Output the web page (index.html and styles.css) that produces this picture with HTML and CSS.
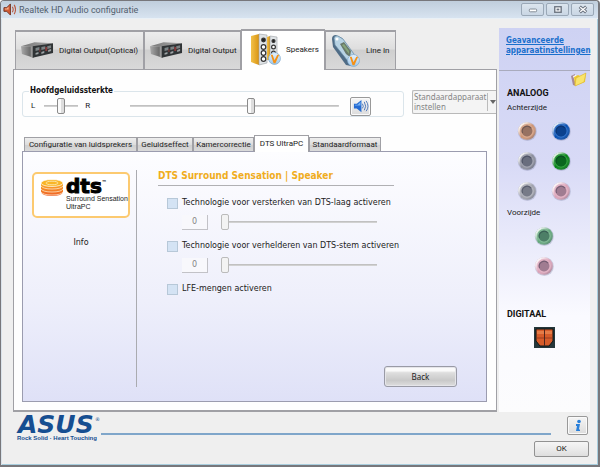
FILE: index.html
```html
<!DOCTYPE html>
<html lang="nl">
<head>
<meta charset="utf-8">
<meta name="viewport" content="width=device-width, initial-scale=1">
<title>Realtek HD Audio configuratie</title>
<link rel="stylesheet" href="styles.css">
</head>
<body>
<svg class="defs" aria-hidden="true">
  <defs>
    <linearGradient id="rackTop" x1="0" x2="1"><stop offset="0" stop-color="#777"/><stop offset="1" stop-color="#a8a8a8"/></linearGradient>
    <linearGradient id="rackSide" x1="0" x2="1"><stop offset="0" stop-color="#aaa"/><stop offset="1" stop-color="#555"/></linearGradient>
    <linearGradient id="gold" x1="0" x2="1"><stop offset="0" stop-color="#f2c14a"/><stop offset="1" stop-color="#d99412"/></linearGradient>
    <linearGradient id="badgeFill" x1="0" y1="0" x2="0" y2="1"><stop offset="0" stop-color="#e8f4ff"/><stop offset="1" stop-color="#9cc6e8"/></linearGradient>
    <linearGradient id="disc" x1="0" y1="0" x2="0" y2="1"><stop offset="0" stop-color="#fbb32a"/><stop offset="1" stop-color="#ee5a24"/></linearGradient>
    <linearGradient id="jackShine" x1="0" y1="0" x2="1" y2="1"><stop offset="0.1" stop-color="#fff"/><stop offset=".5" stop-color="#fff" stop-opacity="0"/><stop offset="1" stop-color="#101830" stop-opacity=".35"/></linearGradient>
    <symbol id="rack" viewBox="0 0 34 17">
      <path d="M0 4 14 0 33 1 17 4Z" fill="url(#rackTop)"/>
      <path d="M0 4 13 4v12L1 12Z" fill="url(#rackSide)"/>
      <path d="M12 4 33 1v10L12 16Z" fill="#303436"/>
      <path d="M10 4h2v12l-2-1Z" fill="#999"/>
      <path d="M15 6l4-1v3l-4 1ZM21 5l4-1v3l-4 1ZM27 4l4-1v3l-4 1Z" fill="#7b8385"/>
      <path d="M15 11l3-1v2l-3 1ZM21 10l3-1v2l-3 1ZM28 8l3-1v2l-3 1Z" fill="#9ca2a4"/>
      <path d="M19 7h1v3h-1ZM25 5h2v4h-2Z" fill="#873b3b"/>
    </symbol>
    <symbol id="check" viewBox="0 0 14 14">
      <circle cx="7" cy="7" r="6.4" fill="url(#badgeFill)" stroke="#79a6cc" stroke-width=".7"/>
      <path d="M3 3h2l2 6 3-6h2L8 12H6Z" fill="#f59116"/>
    </symbol>
    <symbol id="jack" viewBox="0 0 20 20">
      <circle cx="10.300" cy="10.500" r="9.500" fill="#70789a" opacity=".3"/>
      <circle cx="10" cy="10" r="8.800" fill="currentColor"/>
      <circle cx="10" cy="10" r="8" fill="none" stroke="url(#jackShine)" stroke-width="2"/>
      <circle cx="10" cy="10" r="6.200" fill="none" stroke="#fff" stroke-width=".8" opacity=".3"/>
      <circle cx="10" cy="10" r="5.400" fill="#182034" fill-opacity=".3"/>
      <path d="M5.500 12a5 5 0 0 1 8.500-5" fill="none" stroke="#101830" stroke-width="1.200" opacity=".3"/>
    </symbol>
  </defs>
</svg>
<div class="window">
  <header class="titlebar">
    <svg class="app-icon" viewBox="0 0 14 14" aria-hidden="true"><path d="M1 5h3l4-4v12L4 9H1Z" fill="#d15b35" stroke="#70301e"/><path d="M2 6h2l2-2v3H2Z" fill="#f9b18a"/><path d="M10 4q2 3 0 6M12 2q3 5 0 10" fill="none" stroke="#b95a42" stroke-width="1.2"/></svg>
    <h1>Realtek HD Audio configuratie</h1>
    <div class="captions">
      <button type="button" aria-label="Minimaliseren"><svg viewBox="0 0 22 12"><rect x="7.500" y="5.500" width="8" height="3" rx="1" fill="#fff" stroke="#7c8591"/></svg></button>
      <button type="button" aria-label="Maximaliseren"><svg viewBox="0 0 22 12"><rect x="8" y="3" width="7" height="6" fill="#fff" stroke="#6c7480" stroke-width="1.500"/><rect x="10" y="5" width="3" height="2" fill="#6c7480"/></svg></button>
      <button type="button" aria-label="Sluiten"><svg viewBox="0 0 22 12"><path d="m8 3 7 6m0-6-7 6" stroke="#6c7480" stroke-width="3.500"/><path d="m8.500 3.500 6 5m0-5-6 5" stroke="#fff" stroke-width="1.500"/></svg></button>
    </div>
  </header>
  <div class="content">
    <main class="main">
      <nav class="devices" aria-label="Apparaten">
        <button type="button" class="device device-optical"><svg class="rack" aria-hidden="true"><use href="#rack"/></svg>Digital Output(Optical)</button>
        <button type="button" class="device device-digital"><svg class="rack" aria-hidden="true"><use href="#rack"/></svg>Digital Output</button>
        <button type="button" class="device device-speakers active"><svg class="picture" viewBox="0 0 30 34" aria-hidden="true">
          <path d="M0 3 8 1v31l-8-3Z" fill="url(#gold)"/><path d="M8 1l8 1v28l-8 2Z" fill="#dfe3e6" stroke="#9aa0a4" stroke-width=".6"/>
          <path d="M16 4l3-1v24h-3Z" fill="url(#gold)"/><path d="M19 3l7 1v22l-7 2Z" fill="#dfe3e6" stroke="#9aa0a4" stroke-width=".6"/>
          <g fill="#fff" stroke="#333" stroke-width="1.200"><circle cx="12.500" cy="7" r="1.800" fill="#222"/><circle cx="12.500" cy="14" r="2.300"/><circle cx="12.500" cy="20" r="2.300"/><circle cx="12.500" cy="26" r="2.300"/><circle cx="22.500" cy="8" r="1.500" fill="#222"/><circle cx="22.500" cy="14" r="1.900"/><circle cx="22.500" cy="20" r="1.900"/></g>
          <use href="#check" x="17" y="19" width="13" height="13"/></svg>Speakers</button>
        <button type="button" class="device device-line"><svg class="picture" viewBox="0 0 30 34" aria-hidden="true">
          <path d="M1 5q0-4 4-4l6 3 11 15 2 9-4 4-5-1L2 13Z" fill="#4f6c86"/><path d="M3 4q1-3 4-2l5 3 11 15 1 7-4 4L4 11Z" fill="#b8d3e4" stroke="#668aa5" stroke-width=".7"/>
          <path d="m9 10 4-2 7 9-1 6-4-3Z" fill="#68796a"/><path d="m11 11 2-1 5 7v3Z" fill="#86a57a"/><circle cx="6" cy="5" r="1.500" fill="#fff"/>
          <use href="#check" x="16" y="20" width="13" height="13"/></svg>Line In</button>
      </nav>
      <section class="device-panel">
        <div class="volume-row">
          <fieldset class="volume">
            <legend>Hoofdgeluidssterkte</legend>
            <label for="balance">L</label>
            <input class="balance" id="balance" type="range" value="50">
            <span class="right-mark">R</span>
            <input class="master" id="master" type="range" value="58" aria-label="Hoofdgeluidssterkte">
            <button type="button" class="square" aria-label="Dempen"><svg viewBox="0 0 18 16" aria-hidden="true"><path d="M2 5h3l5-4v13L5 10H2Z" fill="#246bd2"/><path d="M3 6h3l3-3v4H3Z" fill="#78b4f4"/><path d="M11 5q2 3 0 5M13 3q3 5 0 9M15 2q4 6 0 11" fill="none" stroke="#4b75ba"/></svg></button>
          </fieldset>
          <div class="default-device">
            <button type="button">Standaardapparaat instellen</button>
            <button type="button" class="more" aria-label="Meer opties"><svg viewBox="0 0 6 4" aria-hidden="true"><path d="M0 0h6L3 4Z" fill="#666"/></svg></button>
          </div>
        </div>
        <nav class="tabs" aria-label="Instellingen">
          <button type="button" class="tab-config">Configuratie van luidsprekers</button>
          <button type="button" class="tab-effect">Geluidseffect</button>
          <button type="button" class="tab-room">Kamercorrectie</button>
          <button type="button" class="tab-dts active">DTS UltraPC</button>
          <button type="button" class="tab-format">Standaardformaat</button>
        </nav>
        <section class="settings">
          <aside class="brand">
            <div class="dts-card">
              <svg class="dts-disc" viewBox="0 0 24 17" aria-hidden="true"><path d="M1 4v9q1 4 11 4t11-4V4Z" fill="url(#disc)"/><ellipse cx="12" cy="4" rx="11" ry="3.500" fill="#f9b527" stroke="#fff" stroke-width=".7"/><ellipse cx="12" cy="4" rx="6" ry="1.800" fill="none" stroke="#fde4a2"/><path d="M1 7q2 3 11 3t11-3M1 10q2 3 11 3t11-3M1 13q2 3 11 3t11-3" fill="none" stroke="#fff3d8" stroke-width=".7"/></svg>
              <div class="dts-words"><strong>dts<sup>™</sup></strong><span>Surround Sensation</span><small>UltraPC</small></div>
            </div>
            <button type="button" class="info-link">Info</button>
          </aside>
          <form class="form">
            <h2>DTS Surround Sensation | Speaker</h2>
            <label class="check"><input type="checkbox">Technologie voor versterken van DTS-laag activeren</label>
            <div class="level"><output for="bass">0</output><input id="bass" type="range" value="0" disabled aria-label="DTS-laag"></div>
            <label class="check"><input type="checkbox">Technologie voor verhelderen van DTS-stem activeren</label>
            <div class="level"><output for="voice">0</output><input id="voice" type="range" value="0" disabled aria-label="DTS-stem"></div>
            <label class="check"><input type="checkbox">LFE-mengen activeren</label>
            <button type="button" class="back">Back</button>
          </form>
        </section>
      </section>
    </main>
    <aside class="sidebar">
      <div class="advanced"><a href="#">Geavanceerde apparaatinstellingen</a></div>
      <div class="connectors">
        <button type="button" class="folder" aria-label="Connectorinstellingen"><svg viewBox="0 0 17 15" aria-hidden="true"><path d="M1 4 5 2l1 12-3-1Z" fill="#a78a96"/><path d="m3 4 3-1v9Z" fill="#fff"/><path d="m4 5 4-2 2 1 6-3-1 9-10 4Z" fill="#efca2d"/><path d="m6 6 10-5-2 9-9 4Z" fill="#f9e46b" stroke="#d4ac2c" stroke-width=".5"/></svg></button>
        <h2>ANALOOG</h2>
        <h3>Achterzijde</h3>
        <div class="jacks">
          <svg class="jack orange"><use href="#jack"/></svg><svg class="jack blue"><use href="#jack"/></svg>
          <svg class="jack gray"><use href="#jack"/></svg><svg class="jack green"><use href="#jack"/></svg>
          <svg class="jack silver"><use href="#jack"/></svg><svg class="jack pink"><use href="#jack"/></svg>
        </div>
        <h3>Voorzijde</h3>
        <div class="jacks front">
          <svg class="jack pale-green"><use href="#jack"/></svg><svg class="jack pink"><use href="#jack"/></svg>
        </div>
        <h2 class="digital">DIGITAAL</h2>
        <svg class="optical" viewBox="0 0 21 21" aria-hidden="true"><path d="M0 0h21v21H0Z" fill="#25363a"/><path d="M2 2h17v12l-4 5H6l-4-5Z" fill="#d65b29" stroke="#0e1718"/><path d="M3 4h15v3H3Z" fill="#e57c48"/><path d="M3 10h15v2H3Z" fill="#b84b24"/><path d="M10.500 2v17" stroke="#50251c"/></svg>
      </div>
    </aside>
  </div>
  <footer class="footer">
    <div class="asus"><svg viewBox="0 0 82 18" role="img" aria-label="ASUS"><text x="1" y="17">ASUS</text><text class="reg" x="78" y="5">®</text></svg><span>Rock Solid · Heart Touching</span></div>
    <div class="rule"></div>
    <div class="actions">
      <button type="button" class="square info" aria-label="Informatie"><svg viewBox="0 0 12 14" aria-hidden="true"><circle cx="7" cy="2.500" r="1.800" fill="#287fda"/><path d="M4 5h4L7 10l1 1v1H4l1-5H4Z" fill="#287fda"/></svg></button>
      <button type="button" class="ok">OK</button>
    </div>
  </footer>
</div>
</body>
</html>
```
FILE: styles.css
```css
* { box-sizing: border-box; }
body { margin: 0; font: 8px/10px Roboto, sans-serif; color: #222; }
button, input, output { font: inherit; color: inherit; margin: 0; }
button { padding: 0; border: 0; background: none; }
h1, h2, h3 { margin: 0; }
.defs { position: absolute; width: 0; height: 0; }
.window {
  min-height: 100vh; display: flex; flex-direction: column; background: #efefef;
  border: solid #77777b; border-width: 1px 2px 2px 1px; border-radius: 4px 4px 0 0;
  box-shadow: inset 1px 0 #d9e2ea, inset -1px -1px #a9cede;
}
.titlebar {
  height: 18px; display: flex; align-items: center; gap: 3px; padding: 0 4px 0 2px;
  background: linear-gradient(#c0cedc, #d7e3f0); border-radius: 3px 3px 0 0; border-bottom: 1px solid #e9f0f6;
}
.titlebar h1 { flex: 1; font-size: 9px; line-height: 12px; font-weight: 400; color: #53606e; }
.app-icon { width: 13px; height: 13px; }
.captions { display: flex; gap: 2px; }
.captions button { width: 23px; height: 13px; border: 1px solid #9aa8b7; border-radius: 2px; background: linear-gradient(#dce5ee, #c9d6e4); }
.captions svg { display: block; width: 100%; height: 100%; }

.content { flex: 1; display: flex; gap: 2px; padding: 9px 8px 0 12px; }
.main { flex: 1; min-width: 0; display: flex; flex-direction: column; padding-top: 1px; }
.devices { display: flex; align-items: flex-end; padding-left: 2px; }
.device {
  height: 39px; display: flex; align-items: center; gap: 5px; padding: 0 4px 0 5px; white-space: nowrap;
  background: linear-gradient(#ededed, #dedede 45%, #cfcfcf 50%, #d9d9d9); border: 1px solid #a0a0a5; border-width: 2px 1px 0;
}
.device-optical { width: 129px; }
.device-digital { width: 97px; }
.device-speakers { width: 84px; }
.device-line { width: 71px; }
.device.active { height: 41px; margin-bottom: -1px; padding: 0 5px 2px 9px; background: #fff; z-index: 1; }
.rack { width: 33px; height: 17px; flex: none; }
.picture { width: 30px; height: 34px; flex: none; }
.device-panel {
  flex: 1; display: flex; flex-direction: column; padding: 13px 0 8px 8px;
  background: #fefefe; border: 1px solid #a0a0a5; border-bottom-width: 2px;
}
.volume-row { display: flex; gap: 8px; padding-top: 3px; }
.volume {
  flex: 1; min-width: 0; height: 31px; margin: 0; padding: 0 32px 0 8px; display: flex; align-items: center;
  border: 1px solid #dbe5eb; border-radius: 3px;
}
.volume legend { padding: 0 1px; margin-left: -2px; font: 700 8px/10px "DejaVu Sans Condensed", sans-serif; color: #111; }
.balance { width: 34px; margin-left: 9px; }
.right-mark { margin: 0 40px 0 7px; }
.master { flex: 1; min-width: 0; }
.square { width: 21px; height: 19px; display: grid; place-items: center; flex: none; border: 1px solid #999; border-radius: 2px; background: linear-gradient(#f5f5f5, #dcdcdc); box-shadow: inset 0 0 0 1px #fafafa; }
.square svg { width: 17px; height: 15px; }
.volume .square { margin-left: 11px; }
input[type=range] { appearance: none; height: 16px; padding: 0; background: linear-gradient(#b9b9b9, #d9d9d9) center / 100% 2px no-repeat; }
input[type=range]::-webkit-slider-thumb { appearance: none; width: 8px; height: 16px; border: 1px solid #8b8b8b; border-radius: 2px; background: linear-gradient(90deg, #fafafa 45%, #ddd 50%); }
.default-device { width: 84px; height: 24px; margin-top: 4px; display: flex; color: #858585; border: 1px solid #b9b9b9; border-right: 0; border-radius: 2px 0 0 2px; background: #f4f4f4; font-family: "Noto Sans", sans-serif; }
.default-device button { flex: 1; text-align: left; padding-left: 1px; }
.default-device .more { flex: none; width: 9px; margin: 2px 0; padding: 0 0 0 2px; border-left: 1px solid #bcbcbc; }
.more svg { width: 6px; height: 4px; display: block; }

.tabs { display: flex; align-items: flex-end; padding: 18px 0 0 2px; }
.tabs button { height: 14px; white-space: nowrap; border: 1px solid #a0a0a5; border-bottom: 0; background: linear-gradient(#eee, #ddd 50%, #cfcfcf 55%, #dadada); }
.tabs .tab-config { width: 113px; }
.tabs .tab-effect { width: 56px; }
.tabs .tab-room { width: 61px; }
.tabs .tab-dts { width: 55px; }
.tabs .tab-format { width: 72px; }
.tabs .active { height: 17px; margin-bottom: -1px; padding-bottom: 1px; background: #fff; z-index: 1; }
.settings {
  flex: 1; display: flex; margin-right: 9px; padding: 18px 8px 14px 9px;
  background: linear-gradient(#fdfdff, #eeeffb 60%, #dfe1f7); border: 1px solid #9b9caf;
}
.brand { width: 105px; padding-top: 2px; border-right: 1px solid #aaabb0; }
.dts-card { width: 98px; height: 46px; display: flex; gap: 2px; padding: 5px 0 0 6px; background: #fff; border: 2px solid #fcca70; border-radius: 5px; white-space: nowrap; }
.dts-disc { width: 24px; height: 17px; flex: none; }
.dts-words { display: flex; flex-direction: column; color: #1b1b1b; font-family: "Liberation Sans", sans-serif; }
.dts-words strong { font: 700 20px/15px "DejaVu Sans", sans-serif; color: #000; display: flex; -webkit-text-stroke: 1px #000; }
.dts-words sup { font-size: 5px; line-height: 6px; -webkit-text-stroke: 0; }
.dts-words span, .dts-words small { font-size: 7px; line-height: 8px; }
.dts-words span { margin-top: 1px; }
.info-link { display: block; width: 98px; margin-top: 19px; line-height: 12px; font-family: "DejaVu Sans", sans-serif; }
.form { flex: 1; display: flex; flex-direction: column; align-items: flex-start; padding-left: 21px; font-family: "DejaVu Sans", sans-serif; }
.form h2 { width: 236px; max-width: 100%; height: 16px; margin-bottom: 11px; font: 700 10px/12px "DejaVu Sans Condensed", sans-serif; color: #f0ad1d; border-bottom: 1px solid #b0b0b3; }
.check { height: 12px; margin-left: 9px; display: flex; align-items: center; gap: 4px; white-space: nowrap; }
.check input { appearance: none; width: 11px; height: 11px; background: #d4e3f4; border: 1px solid #b7c8d8; }
.level { display: flex; align-items: center; height: 16px; margin: 5px 0 10px 24px; }
.level output { width: 26px; height: 15px; line-height: 13px; text-align: center; color: #858585; border: solid #c2c2c7; border-width: 0 1px 1px 0; background: #f8f8fc; }
.level input { width: 156px; margin-left: 13px; }
.level input::-webkit-slider-thumb { border-color: #bbb; background: #f3f3f3; }
.back { align-self: flex-end; width: 73px; height: 21px; margin: auto 21px 0 0; border: 1px solid #999aa5; border-radius: 3px; background: linear-gradient(#fafafa 20%, #dedede 30%, #c9c9c9 70%, #dedede); box-shadow: inset 0 0 0 1px #e5e5e9; font-family: "Noto Sans", sans-serif; }

.sidebar { width: 91px; display: flex; flex-direction: column; background: linear-gradient(#ced2f3, #d8daf6 35%, #fafaff 75%, #fcfcfd); }
.advanced { height: 43px; padding: 8px 0 0 7px; border-bottom: 1px solid #a9abbd; font: 700 8px/10px "DejaVu Sans Condensed", sans-serif; }
.advanced a { color: #1a6fcc; }
.connectors { display: flex; flex-direction: column; padding: 1px 3px 0 8px; }
.folder { align-self: flex-end; width: 17px; height: 15px; }
.folder svg { display: block; width: 17px; height: 15px; }
.connectors h2 { font-size: 9px; line-height: 13px; color: #111; }
.connectors h3 { font-size: 8px; line-height: 10px; font-weight: 400; margin-top: 3px; }
.jacks { display: grid; grid-template-columns: 20px 20px; column-gap: 14px; row-gap: 10px; padding: 8px 0 4px 10px; }
.jacks.front { grid-template-columns: 20px; padding-left: 27px; }
.jack { width: 20px; height: 20px; display: block; }
.orange { color: #cf9676; }
.blue { color: #0650b4; }
.gray { color: #8d909e; }
.green { color: #058516; }
.silver { color: #a1a3ad; }
.pink { color: #dba4b9; }
.pale-green { color: #65a87d; }
.connectors .digital { margin-top: 28px; }
.optical { width: 21px; height: 21px; margin: 6px 0 0 27px; }

.footer { height: 53px; display: flex; padding: 4px 9px 0 16px; }
.asus { width: 84px; color: #164e91; }
.asus svg { display: block; width: 82px; height: 18px; overflow: visible; }
.asus text { font: italic 700 25px "DejaVu Sans", sans-serif; fill: #164e91; }
.asus .reg { font: 5px "DejaVu Sans", sans-serif; }
.asus span { display: block; font: 700 6px/8px "Liberation Sans", sans-serif; white-space: nowrap; }
.rule { flex: 1; height: 2px; margin-top: 17px; background: #7fa6ca; }
.actions { width: 38px; display: flex; flex-direction: column; align-items: flex-end; gap: 6px; }
.info { margin-right: 1px; }
.info svg { width: 12px; height: 14px; }
.ok { width: 55px; height: 16px; border: 1px solid #929292; border-radius: 2px; background: linear-gradient(#f5f5f5, #ebebeb 50%, #dedede); }
```
